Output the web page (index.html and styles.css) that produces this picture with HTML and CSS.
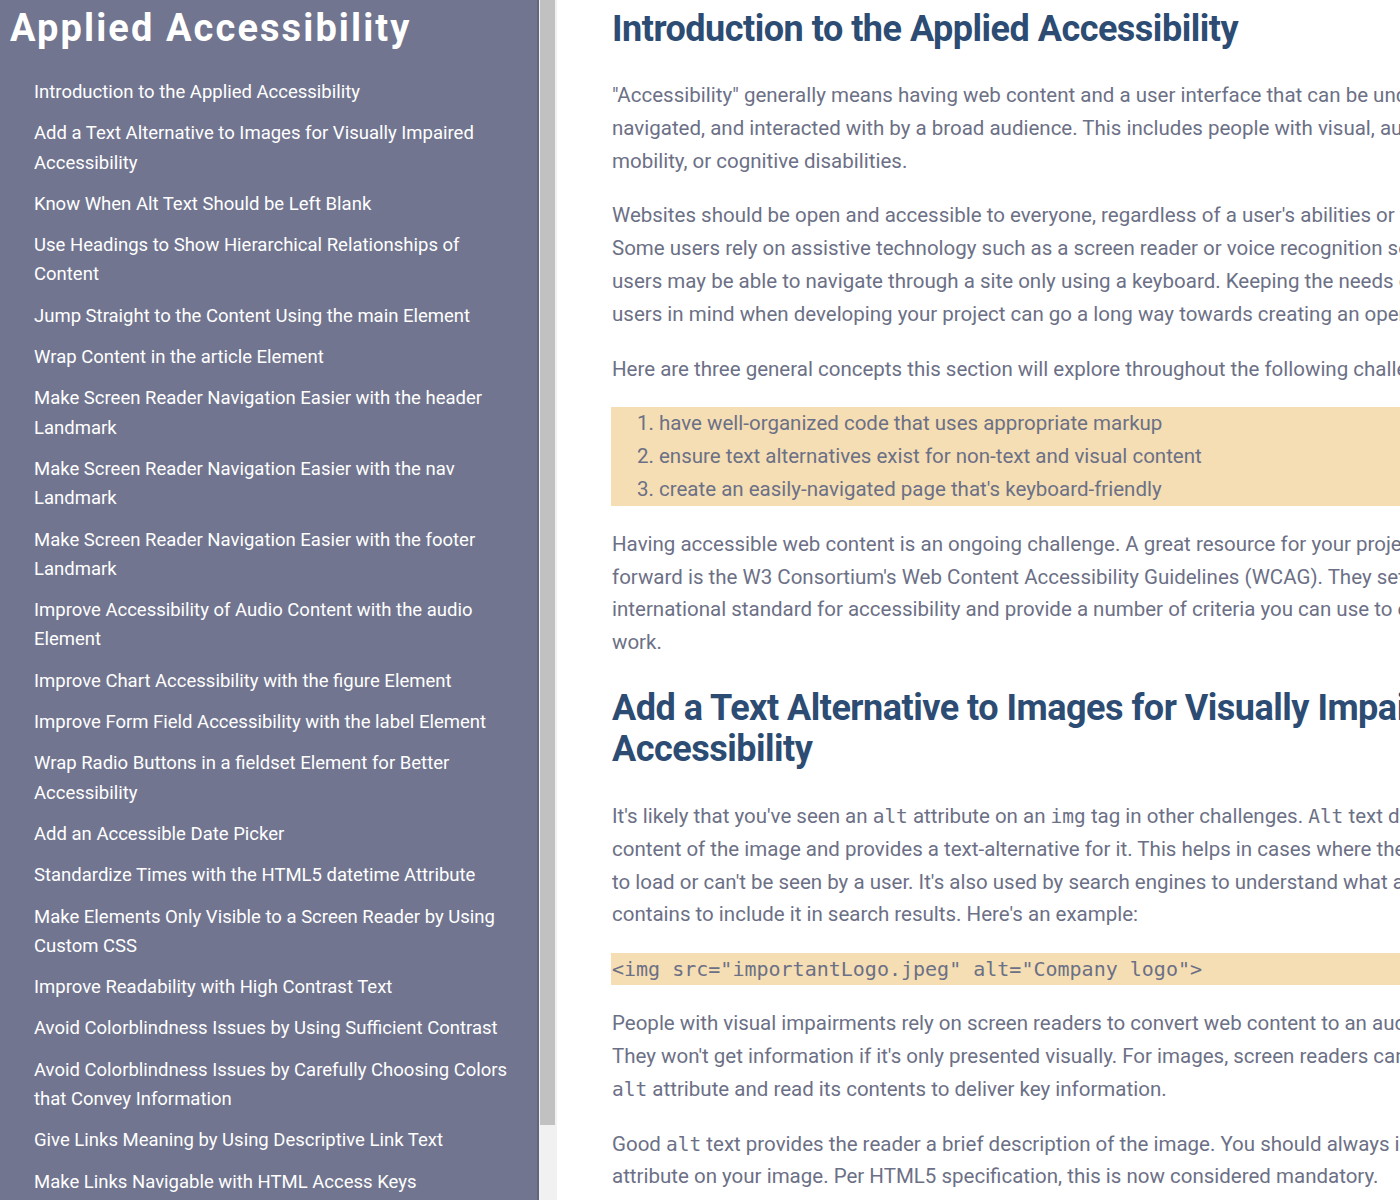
FILE: index.html
```html
<!DOCTYPE html>
<html lang="en">
<head>
<meta charset="utf-8">
<title>Applied Accessibility</title>
<link rel="stylesheet" href="styles.css">
</head>
<body>
<div class="page">
  <div class="sidebar">
    <nav class="side-nav">
      <header class="side-title">Applied Accessibility</header>
      <ul class="side-list">
        <li><a href="#">Introduction to the Applied Accessibility</a></li>
        <li><a href="#">Add a Text Alternative to Images for Visually Impaired Accessibility</a></li>
        <li><a href="#">Know When Alt Text Should be Left Blank</a></li>
        <li><a href="#">Use Headings to Show Hierarchical Relationships of Content</a></li>
        <li><a href="#">Jump Straight to the Content Using the main Element</a></li>
        <li><a href="#">Wrap Content in the article Element</a></li>
        <li><a href="#">Make Screen Reader Navigation Easier with the header Landmark</a></li>
        <li><a href="#">Make Screen Reader Navigation Easier with the nav Landmark</a></li>
        <li><a href="#">Make Screen Reader Navigation Easier with the footer Landmark</a></li>
        <li><a href="#">Improve Accessibility of Audio Content with the audio Element</a></li>
        <li><a href="#">Improve Chart Accessibility with the figure Element</a></li>
        <li><a href="#">Improve Form Field Accessibility with the label Element</a></li>
        <li><a href="#">Wrap Radio Buttons in a fieldset Element for Better Accessibility</a></li>
        <li><a href="#">Add an Accessible Date Picker</a></li>
        <li><a href="#">Standardize Times with the HTML5 datetime Attribute</a></li>
        <li><a href="#">Make Elements Only Visible to a Screen Reader by Using Custom CSS</a></li>
        <li><a href="#">Improve Readability with High Contrast Text</a></li>
        <li><a href="#">Avoid Colorblindness Issues by Using Sufficient Contrast</a></li>
        <li><a href="#">Avoid Colorblindness Issues by Carefully Choosing Colors that Convey Information</a></li>
        <li><a href="#">Give Links Meaning by Using Descriptive Link Text</a></li>
        <li><a href="#">Make Links Navigable with HTML Access Keys</a></li>
        <li><a href="#">Use tabindex to Add Keyboard Focus to an Element</a></li>
        <li><a href="#">Use tabindex to Specify the Order of Keyboard Focus for Several Elements</a></li>
      </ul>
    </nav>
    <div class="scroll-rail" aria-hidden="true"><div class="scroll-thumb"></div></div>
  </div>
  <main class="content">
    <section class="lesson">
      <h1 class="lesson-title">Introduction to the Applied Accessibility</h1>
      <p>"Accessibility" generally means having web content and a user interface that can be understood, navigated, and interacted with by a broad audience. This includes people with visual, auditory, mobility, or cognitive disabilities.</p>
      <p>Websites should be open and accessible to everyone, regardless of a user's abilities or resources. Some users rely on assistive technology such as a screen reader or voice recognition software. Other users may be able to navigate through a site only using a keyboard. Keeping the needs of various users in mind when developing your project can go a long way towards creating an open web.</p>
      <p>Here are three general concepts this section will explore throughout the following challenges:</p>
      <ol class="concepts">
        <li>have well-organized code that uses appropriate markup</li>
        <li>ensure text alternatives exist for non-text and visual content</li>
        <li>create an easily-navigated page that's keyboard-friendly</li>
      </ol>
      <p>Having accessible web content is an ongoing challenge. A great resource for your projects going forward is the W3 Consortium's Web Content Accessibility Guidelines (WCAG). They set the international standard for accessibility and provide a number of criteria you can use to evaluate your work.</p>
    </section>
    <section class="lesson">
      <h2 class="lesson-title">Add a Text Alternative to Images for Visually Impaired Accessibility</h2>
      <p>It's likely that you've seen an <code>alt</code> attribute on an <code>img</code> tag in other challenges. <code>Alt</code> text describes the content of the image and provides a text-alternative for it. This helps in cases where the image fails to load or can't be seen by a user. It's also used by search engines to understand what an image contains to include it in search results. Here's an example:</p>
      <pre class="example"><code>&lt;img src="importantLogo.jpeg" alt="Company logo"&gt;</code></pre>
      <p>People with visual impairments rely on screen readers to convert web content to an audio interface. They won't get information if it's only presented visually. For images, screen readers can access the <code>alt</code> attribute and read its contents to deliver key information.</p>
      <p>Good <code>alt</code> text provides the reader a brief description of the image. You should always include an <code>alt</code> attribute on your image. Per HTML5 specification, this is now considered mandatory.</p>
    </section>
  </main>
</div>
</body>
</html>
```
FILE: styles.css
```css
html, body {
  margin: 0;
  padding: 0;
  overflow: hidden;
  height: 100%;
}

body {
  background: #ffffff;
  font-family: Roboto, "Noto Sans", sans-serif;
}

.page {
  display: flex;
  align-items: flex-start;
  width: 1600px;
  height: 100vh;
}

.sidebar {
  flex: 0 0 auto;
  display: flex;
  height: 100vh;
  overflow: hidden;
}

.side-nav {
  width: 537px;
  height: 100vh;
  overflow: hidden;
  background: #71758f;
}

.scroll-rail {
  width: 15px;
  height: 100vh;
  background: #f1f1f1;
  border-left: 2px solid #62657d;
  padding: 0 2px 0 1px;
}

.scroll-thumb {
  height: 1125px;
  background: #c1c1c1;
}

.side-title {
  font-family: Roboto, sans-serif;
  font-weight: 700;
  font-size: 38px;
  letter-spacing: 2.1px;
  line-height: 44px;
  color: #ffffff;
  padding: 6px 0 0 10px;
}

.side-list {
  list-style: none;
  margin: 0;
  padding: 28px 20px 12px 34px;
}

.side-list li {
  margin-bottom: 12px;
  line-height: 29.3px;
  font-size: 18.5px;
}

.side-list a {
  color: #ffffff;
  text-decoration: none;
}

.content {
  flex: 0 0 auto;
  width: 920px;
  padding: 9px 56px 40px 55px;
  color: #6c7086;
  font-size: 20.5px;
  line-height: 32.8px;
}

.lesson-title {
  font-family: Roboto, sans-serif;
  font-weight: 700;
  font-size: 36px;
  letter-spacing: -0.5px;
  line-height: 41px;
  color: #2c4c73;
  margin: 0 0 29px 0;
}

h2.lesson-title {
  margin-top: 29px;
  margin-bottom: 30px;
}

.content p {
  margin: 0 0 22px 0;
}

.content code {
  font-family: "DejaVu Sans Mono", monospace;
  font-size: 19.5px;
  line-height: 1;
}

.concepts {
  background: #f5deb3;
  margin: 0 0 22px -1px;
  padding: 0 0 0 48px;
}

.example {
  background: #f5deb3;
  margin: 0 0 22px -1px;
  padding: 0 0 0 1px;
  line-height: 32px;
  white-space: pre;
}

.example code {
  font-size: 20px;
  line-height: 32px;
  color: #6c7086;
}
```
